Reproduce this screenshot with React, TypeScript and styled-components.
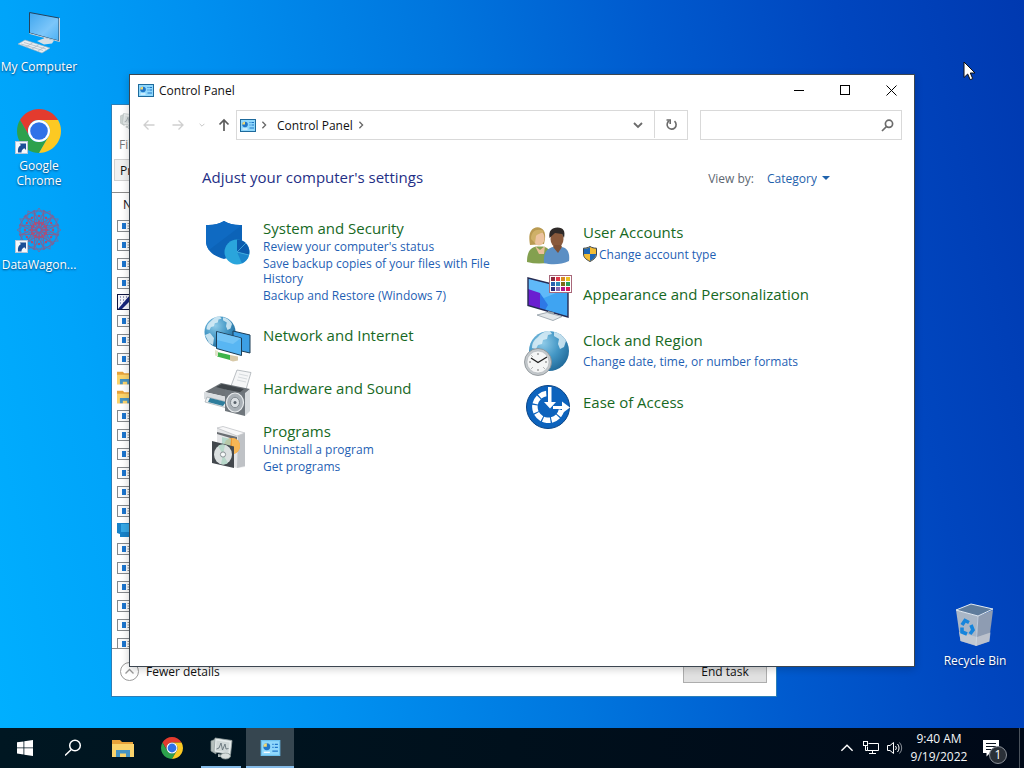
import React from "react";
import styled, { createGlobalStyle } from "styled-components";

const GlobalStyle = createGlobalStyle`
  * { box-sizing: border-box; }
  body { margin: 0; font-family: "Open Sans", "Noto Sans", sans-serif; font-size: 12px; line-height: 15px; color: #111; }
  button, input, select { font: inherit; color: inherit; margin: 0; padding: 0; border: 0; background: none; border-radius: 0; }
  a { text-decoration: none; color: inherit; }
  h1, h2, ul { margin: 0; padding: 0; font-weight: 400; list-style: none; }
  svg { display: block; flex: none; }
`;

const Screen = styled.div`
  display: flex;
  flex-direction: column;
  height: 100vh;
  min-height: 600px;
  overflow: hidden;
  background: linear-gradient(78deg, #00b0ff 0%, #00a4fa 14%, #0090f0 30%, #0076de 50%, #005ace 68%, #0046bf 84%, #0039b0 100%);
`;

const Desktop = styled.main`
  position: relative;
  flex: 1;
`;

const ShortcutColumn = styled.div`
  display: flex;
  flex-direction: column;
  width: 78px;
  padding-top: 8px;
`;

const Shortcut = styled.button`
  display: flex;
  flex-direction: column;
  align-items: center;
  gap: 3px;
  min-height: 99px;
  width: 78px;
  color: #fff;
  text-shadow: 0 1px 2px rgba(0, 20, 60, 0.7);
  white-space: pre;
`;

const BinSpot = styled.div`
  position: absolute;
  right: 10px;
  bottom: 27px;
`;

const Pointer = styled.div`
  position: absolute;
  right: 48px;
  top: 61px;
`;

/* ---------- Windows ---------- */

const Frame = styled.section`
  position: absolute;
  display: flex;
  flex-direction: column;
  background: #fff;
  border: 1px solid #3c4650;
`;

const TaskManagerFrame = styled(Frame)`
  inset: 104px 247px 31px 111px;
  border-color: #2c7fb8;
`;

const ControlPanelFrame = styled(Frame)`
  inset: 74px 109px 61px 129px;
  box-shadow: 0 2px 8px rgba(0, 0, 0, 0.2);
`;

const TmTitle = styled.header`
  display: flex;
  align-items: center;
  gap: 5px;
  height: 31px;
  padding-left: 7px;
  opacity: 0.7;
`;

const TmMenu = styled.nav`
  height: 19px;
  padding: 1px 7px;
  color: #777;
`;

const TmTabs = styled.div`
  display: flex;
  height: 38px;
  padding: 4px 2px 0;
  border-bottom: 1px solid #8c8c8c;
`;

const TmTab = styled.button`
  height: 22px;
  padding: 0 5px;
  border: 1px solid #d0d0d0;
  background: #f0f0f0;
`;

const TmBody = styled.div`
  flex: 1;
  min-height: 0;
  overflow: hidden;
  border-bottom: 1px solid #8c8c8c;
`;

const TmHead = styled.div`
  height: 23px;
  padding: 4px 11px;
`;

const TmRow = styled.div`
  display: flex;
  align-items: center;
  height: 19px;
  padding-left: 5px;
`;

const TmFooter = styled.footer`
  display: flex;
  align-items: center;
  justify-content: space-between;
  height: 47px;
  padding: 0 9px 2px 8px;
`;

const Details = styled.button`
  display: flex;
  align-items: center;
  gap: 7px;
`;

const EndTask = styled.button`
  width: 84px;
  height: 22px;
  border: 1px solid #adadad;
  background: #e1e1e1;
`;

const TitleBar = styled.header`
  display: flex;
  align-items: center;
  height: 30px;
  padding-left: 8px;
  gap: 5px;
`;

const Caption = styled.h1`
  flex: 1;
  font-size: 12px;
`;

const CaptionButtons = styled.div`
  display: flex;
`;

const CaptionButton = styled.button`
  display: grid;
  place-items: center;
  width: 46px;
  height: 30px;
`;

const NavBar = styled.nav`
  display: flex;
  align-items: center;
  height: 30px;
  margin: 5px 12px 0 11px;
`;

const NavButton = styled.button<{ $w: number }>`
  display: grid;
  place-items: center;
  width: ${(p) => p.$w}px;
  height: 30px;
`;

const UpButton = styled(NavButton)`
  padding-left: 6px;
`;

const AddressBar = styled.div`
  display: flex;
  align-items: center;
  flex: 1;
  height: 30px;
  padding-left: 3px;
  border: 1px solid #d9d9d9;
`;

const Crumb = styled.button`
  margin: 0 4px 0 5px;
`;

const AddressEnd = styled.div`
  display: flex;
  margin-left: auto;
`;

const Refresh = styled(NavButton)`
  border-left: 1px solid #d9d9d9;
  height: 28px;
`;

const Search = styled.label`
  display: flex;
  align-items: center;
  width: 202px;
  height: 30px;
  margin-left: 12px;
  padding-right: 7px;
  border: 1px solid #d9d9d9;
`;

const SearchInput = styled.input`
  flex: 1;
  min-width: 0;
  height: 26px;
  padding: 0 6px;
  outline: none;
`;

const Content = styled.div`
  flex: 1;
  padding: 27px 84px 0 72px;
`;

const ContentHead = styled.div`
  display: flex;
  align-items: center;
  justify-content: space-between;
  height: 20px;
`;

const Heading = styled.h2`
  font-size: 15px;
  line-height: 20px;
  color: #1f2f86;
`;

const ViewBy = styled.label`
  display: flex;
  align-items: center;
  gap: 13px;
  padding-top: 2px;
  color: #5d6670;
`;

const SelectWrap = styled.span`
  display: flex;
  align-items: center;
  gap: 5px;
  color: #1f62ac;
`;

const CategorySelect = styled.select`
  appearance: none;
  outline: none;
  height: 16px;
`;

const Columns = styled.div`
  display: grid;
  grid-template-columns: 320px minmax(0, 1fr);
  margin-top: 31px;
  padding-left: 2px;
`;

const Column = styled.div<{ $top: number; $gap: number }>`
  display: flex;
  flex-direction: column;
  gap: ${(p) => p.$gap}px;
  padding-top: ${(p) => p.$top}px;
`;

const Category = styled.article<{ $tail?: number }>`
  display: flex;
  gap: 11px;
  min-height: 48px;
  padding-bottom: ${(p) => p.$tail ?? 0}px;
`;

const CategoryText = styled.div<{ $top: number }>`
  width: 230px;
  padding-top: ${(p) => p.$top}px;
`;

const CategoryTitle = styled.a`
  display: block;
  font-size: 15px;
  line-height: 20px;
  color: #17691f;
  white-space: nowrap;
`;

const Links = styled.ul<{ $gap: number }>`
  display: flex;
  flex-direction: column;
  gap: 2px;
  margin-top: ${(p) => p.$gap}px;
`;

const TaskLink = styled.a`
  display: flex;
  align-items: center;
  gap: 2px;
  color: #1f5fb4;
`;

/* ---------- Taskbar ---------- */

const Taskbar = styled.footer`
  display: flex;
  align-items: stretch;
  justify-content: space-between;
  height: 40px;
  background: linear-gradient(90deg, #001722 0%, #00101c 50%, #000918 100%);
  color: #f4f6f8;
`;

const TaskGroup = styled.div`
  display: flex;
  gap: 1px;
  padding-left: 1px;
`;

const TaskButton = styled.button<{ $state?: "open" | "active" }>`
  display: flex;
  align-items: center;
  justify-content: center;
  width: 48px;
  background: ${(p) => (p.$state === "active" ? "#364650" : "none")};
  position: relative;
  &::after {
    content: "";
    position: absolute;
    bottom: 0;
    left: ${(p) => (p.$state === "active" ? 0 : 4)}px;
    right: ${(p) => (p.$state === "active" ? 0 : 4)}px;
    height: ${(p) => (p.$state ? 2 : 0)}px;
    background: #85bbe8;
  }
`;

const Tray = styled.div`
  display: flex;
  align-items: center;
`;

const TrayButton = styled.button<{ $w: number }>`
  display: grid;
  place-items: center;
  width: ${(p) => p.$w}px;
  height: 40px;
`;

const Clock = styled.button`
  width: 64px;
  line-height: 18px;
  white-space: nowrap;
  text-align: center;
`;

const Notify = styled.button`
  position: relative;
  display: grid;
  place-items: center;
  width: 40px;
  height: 40px;
`;

const Badge = styled.span`
  position: absolute;
  left: 18px;
  top: 18px;
  width: 18px;
  height: 18px;
  line-height: 16px;
  border-radius: 50%;
  border: 1px solid #8a9098;
  background: #2a3038;
  color: #fff;
`;

const ShowDesktop = styled.button`
  width: 5px;
  height: 40px;
  margin-left: 8px;
  border-left: 1px solid #4a525c;
`;

/* ---------- Drawings ---------- */

const Chrome = ({ size }: { size: number }) => (
  <svg width={size} height={size} viewBox="2 2 44 44">
    <path fill="#e33b2e" d="M24 13H43.05A22 22 0 0 0 4.95 13L14.47 29.5A11 11 0 0 1 24 13z" />
    <path fill="#2da14c" d="M14.47 29.5L4.95 13A22 22 0 0 0 24 46L33.53 29.5A11 11 0 0 1 14.47 29.5z" />
    <path fill="#fcc923" d="M33.53 29.5L24 46A22 22 0 0 0 43.05 13H24A11 11 0 0 1 33.53 29.5z" />
    <circle cx="24" cy="24" r="11" fill="#fff" />
    <circle cx="24" cy="24" r="8.8" fill="#2f72e8" />
  </svg>
);

const ShortcutArrow = () => (
  <g>
    <rect x="0.5" y="34.5" width="12" height="12" fill="#f6f8fb" stroke="#b7c6d8" />
    <path d="M3 45.500c-.500-4 .500-6 3-7.500L4.500 36.500H11V43L9.300 41.300C7.500 42.200 6.500 43.500 6.500 45.500z" fill="#1c4f96" />
  </g>
);

const ComputerIcon = () => (
  <svg width="48" height="48" viewBox="0 0 48 48">
    <defs>
      <linearGradient id="scr" x1="0" y1="0" x2="1" y2="1">
        <stop offset="0" stopColor="#3fa6ee" />
        <stop offset="0.6" stopColor="#7cc6fa" />
        <stop offset="1" stopColor="#4ab0f4" />
      </linearGradient>
    </defs>
    <path d="M14.500 4.500L44 10V33L14.500 25z" fill="url(#scr)" stroke="#23435f" />
    <path d="M44.500 10V33.500L14.500 25.500" fill="none" stroke="#c8d4de" />
    <path d="M29 30l5 1v4l-5-1z" fill="#b8c4cc" />
    <path d="M22 33l8-3 9 2.500-2 3-8 1z" fill="#d7dfe5" />
    <path d="M3 36l7-4 25 8-8 5z" fill="#e9eef2" stroke="#9db0be" strokeWidth="0.6" />
    <path d="M6 36l22 6.500M9 34.500l22 6.500M11 39l7-4.500M17 41l7-4.500M23 43l7-4.500" stroke="#a7b5c0" strokeWidth="0.7" />
  </svg>
);

const ChromeShortcut = () => (
  <svg width="48" height="48" viewBox="0 0 48 48">
    <g transform="translate(2 2)"><Chrome size={44} /></g>
    <ShortcutArrow />
  </svg>
);

const WagonIcon = () => (
  <svg width="48" height="48" viewBox="0 0 48 48">
    <g fill="none" strokeWidth="1">
      {Array.from({ length: 12 }, (_, i) => (
        <g key={i} transform={`rotate(${i * 30} 24 24)`}>
          <path d="M24 2l5.500 8.500L24 19l-5.500-8.500z" stroke="#6a72a8" />
          <path d="M18 5h12l-6 10z" stroke="#7c6498" />
          <path d="M24 15l4 4-4 3-4-3z" stroke="#9a5484" />
          <circle cx="24" cy="10" r="1.200" fill="#b8486c" stroke="none" />
          <circle cx="24" cy="17" r="1.100" fill="#cc4462" stroke="none" />
        </g>
      ))}
    </g>
    <ShortcutArrow />
  </svg>
);

const BinIcon = () => (
  <svg width="48" height="48" viewBox="0 0 48 48">
    <path d="M5 8L27 14l-2 29.500L9.500 39z" fill="#a9b6c6" />
    <path d="M27 14l15-6-4 31.500L25 44z" fill="#8e9cb2" />
    <path d="M5 8L20 2l22 5L27 14z" fill="#5f7c9c" stroke="#e3eaf0" />
    <path d="M8 30l1.500 9L25 44l13.500-4.500 1-9L26 35z" fill="#c9ced4" opacity="0.75" />
    <path d="M27 14l-2 30" stroke="#d5dde5" strokeWidth="0.800" />
    <g fill="none" stroke="#1685dc" strokeWidth="3.600">
      <path d="M11 23l3-4.500 4 2" />
      <path d="M20 23l2 5-3 4" />
      <path d="M16 32L11 30v-4.500" />
    </g>
  </svg>
);

const PointerIcon = () => (
  <svg width="13" height="20" viewBox="0 0 13 20">
    <path d="M1 1v15.500l3.700-3.500 2.500 5.700 2.500-1.100L7.300 12H12z" fill="#fff" stroke="#111" />
  </svg>
);

const PanelGlyph = ({ w, h, edge = "#1e6a9c" }: { w: number; h: number; edge?: string }) => (
  <svg width={w} height={h} viewBox="0 0 16 13">
    <rect x="0.500" y="0.500" width="15" height="12" fill="#90d8fc" stroke={edge} />
    <circle cx="5" cy="5.500" r="2.800" fill="#2076c8" />
    <path d="M5 5.500V2.700A2.800 2.800 0 0 0 2.200 5.500z" fill="#f3d873" />
    <path d="M9.500 3.500h1M11.500 3.500h2.500M9.500 6h1M11.500 6h2.500M9.500 9h4.500" stroke="#2076c8" />
    <path d="M2.500 10h5" stroke="#fff" />
  </svg>
);

const MonitorGlyph = ({ size }: { size: number }) => (
  <svg width={size} height={size} viewBox="0 0 24 24">
    <path d="M2 5l5-2v15l-5-3z" fill="#b5bfbd" stroke="#8c9896" strokeWidth="0.700" />
    <path d="M6 2l17 2.500-1.500 14L5 16z" fill="#e4eaea" stroke="#97a2a2" strokeWidth="0.800" />
    <path d="M7.500 4.500l13 2-1 10-12.500-2z" fill="#cfd7d7" />
    <path d="M7.500 13l2.500-1 2-5 1.500 7 2.500-6 1 5 2.500-.500" fill="none" stroke="#66747a" strokeWidth="0.900" />
    <path d="M9 18l5 1v2H9z" fill="#aab4b4" />
    <ellipse cx="16.500" cy="20" rx="5" ry="3" fill="#d8dedd" stroke="#8c9896" strokeWidth="0.800" />
  </svg>
);

const FolderGlyph = ({ w, h }: { w: number; h: number }) => (
  <svg width={w} height={h} viewBox="0 0 22 19">
    <path d="M0 1h8l2 2h11v15H0z" fill="#e8a33a" />
    <path d="M0 5h22v13H0z" fill="#fbd46c" />
    <path d="M4 18v-7h14v7h-4v-3.500H8V18z" fill="#4593c4" />
  </svg>
);

const AppGlyph = () => (
  <svg width="16" height="12" viewBox="0 0 16 12">
    <rect x="0.500" y="0.500" width="15" height="11" fill="#fbfbfb" stroke="#85898d" />
    <rect x="5" y="3" width="4" height="6" fill="#1d74cc" />
    <path d="M10.500 3.500h3M10.500 6h3M10.500 8.500h3" stroke="#8b8f93" />
  </svg>
);

const PenGlyph = () => (
  <svg width="16" height="16" viewBox="0 0 16 16">
    <rect x="0.500" y="0.500" width="15" height="15" fill="#f4f4fa" stroke="#101540" />
    <path d="M3 3h1M6 3h1M9 3h1M3 6h1M6 6h1M9 6h1M3 9h1M6 9h1" stroke="#404a80" />
    <path d="M1 15L13 1v6L5 15z" fill="#16247a" />
  </svg>
);

const BlueGlyph = () => (
  <svg width="16" height="14" viewBox="0 0 16 14">
    <path d="M0 0h16v10l-4 1v3H3v-3l-3-1z" fill="#1882c8" />
    <path d="M4 1h9v8H4z" fill="#37a8e6" />
  </svg>
);

const Continents = () => (
  <path
    d="M12 8c4-5 8-6 12-6l2 3-4 1-1 4-4 1-1 4-4 1-2 4-4-1c0-5 2-8 6-11zM28 3c6 1 10 5 12 9l-2 6-4 2-2-5 1-5-5-3z"
    fill="#e4f2f9"
    opacity="0.8"
  />
);

const GlobeDefs = ({ id }: { id: string }) => (
  <defs>
    <radialGradient id={id} cx="0.35" cy="0.3" r="0.8">
      <stop offset="0" stopColor="#8fcbe8" />
      <stop offset="0.5" stopColor="#4497c5" />
      <stop offset="1" stopColor="#1c6494" />
    </radialGradient>
  </defs>
);

const SecurityIcon = () => (
  <svg width="48" height="48" viewBox="0 -2 48 48">
    <path d="M20 1c5 3 11 4.500 18 4v16c0 9-7 15-18 18C9 36 2 30 2 21V5c7 .500 13-1 18-4z" fill="#0c63b8" />
    <path d="M20 1C15 4 9 5.500 2 5v16c0 3 1 6 3 9L38 5C31 5.500 25 4 20 1z" fill="#0f6ac2" />
    <circle cx="33" cy="32" r="12.500" fill="#2aa5dc" />
    <path d="M33 32V19.500A12.500 12.500 0 0 1 45 35z" fill="#0b5cae" />
    <path d="M33 32L45 35A12.500 12.500 0 0 1 38 43.500z" fill="#1b86cc" />
    <path d="M33 32l9-9M33 32l12 3" stroke="#55bde8" strokeWidth="0.700" />
  </svg>
);

const NetworkIcon = () => (
  <svg width="48" height="48" viewBox="0 0 48 48">
    <GlobeDefs id="g1" />
    <circle cx="16" cy="17" r="15.500" fill="url(#g1)" />
    <g transform="translate(-2 0) scale(.75)"><Continents /></g>
    <path d="M1 20l5-2 4 5-1 7-4-2z" fill="#dceef7" opacity="0.850" />
    <path d="M29 16l17 4v18l-17-4z" fill="#3d9fe4" stroke="#1c3c55" />
    <path d="M12.500 16.500l25 6.500v17.500l-25-7z" fill="#58b6f3" stroke="#1c3c55" />
    <path d="M13 17l24 6-8 6-16-4z" fill="#86cdf8" opacity="0.600" />
    <path d="M13 37l13 3v5l-13-3.500z" fill="#3eb44a" />
    <path d="M11 35l3 1v5.500l-3-1z" fill="#dfe3c8" />
    <path d="M26 40l8 1.500v4l-5 1-3-1z" fill="#d8c9a8" />
  </svg>
);

const HardwareIcon = () => (
  <svg width="48" height="48" viewBox="0 -1 48 48">
    <path d="M27 17L33 1l14 2.500-5 17z" fill="#f5f6f7" stroke="#aab0b5" strokeWidth="0.800" />
    <path d="M35 5l9 2M34 8l9 2M33 11l9 2" stroke="#c9ced2" strokeWidth="0.700" />
    <path d="M1 23l16-9 29 6-10 11z" fill="#6d7378" />
    <path d="M12 18l6-3 22 5-5 4z" fill="#3f454a" />
    <path d="M0 23l36 8v6L0 30z" fill="#d9dde0" />
    <path d="M3 28l20 5v6L1 33z" fill="#eef1f3" stroke="#9ea6ab" strokeWidth="0.700" />
    <path d="M6 29l16 4-3 4-15-4z" fill="#2e7d9c" />
    <path d="M21 20.500l20 3.500v23l-20-5z" fill="#6f767c" />
    <path d="M41 24l5-4v22l-5 5z" fill="#d7dbde" />
    <ellipse cx="31" cy="33.500" rx="8.500" ry="9.500" fill="#a9b0b6" stroke="#e7eaec" strokeWidth="1.200" />
    <ellipse cx="31" cy="33.500" rx="4.500" ry="5.200" fill="#d9dee2" stroke="#828a90" />
    <circle cx="31" cy="33.500" r="1.500" fill="#59626a" />
  </svg>
);

const ProgramsIcon = () => (
  <svg width="48" height="48" viewBox="0 -4 48 48">
    <path d="M13 3l21 6 7-1v34l-8 1-20-6z" fill="#e4e5e7" />
    <path d="M13 3l6-1.500L41 8l-8 3z" fill="#f7f7f8" stroke="#b9bcc0" strokeWidth="0.700" />
    <path d="M13 7l20 5v3l-20-6z" fill="#6a6e73" />
    <path d="M34 11l7-3v33l-8 2z" fill="#bfc2c6" />
    <circle cx="28" cy="21" r="8" fill="#f09a32" />
    <path d="M28 13v16a8 8 0 0 0 0-16z" fill="#f7b655" />
    <path d="M18 12l9 2-1 10-8-2z" fill="#a9d3c4" opacity="0.800" />
    <path d="M8 16l22 5.500V43L8 38z" fill="#43484d" />
    <ellipse cx="19" cy="29.500" rx="9" ry="10" fill="#dbe0e0" />
    <path d="M19 29.500L14 21a9 10 0 0 1 7-1zM19 29.500l5 8.500a9 10 0 0 1-7 1z" fill="#b8d8ca" />
    <circle cx="19" cy="29.500" r="2.600" fill="#f6f8f8" stroke="#8b9396" />
  </svg>
);

const UsersIcon = () => (
  <svg width="48" height="48" viewBox="0 0 48 48">
    <path d="M6 25c-1-7-1-11 1-14 3-5 10-5 13 0 2 4 1 9 0 13z" fill="#b99a52" />
    <ellipse cx="15" cy="18" rx="5.500" ry="7.500" fill="#ecc3a0" />
    <path d="M7 19c0-8 6-11 13-8-2 3-6 2-8 5l-1 7z" fill="#cfb068" />
    <path d="M3 42c0-11 4-15 10-15.500h6c6 1 8 5 8 15.500-8 2-16 2-24 0z" fill="#83a04f" />
    <path d="M11 26l5 4 5-4-1 8-5 0z" fill="#e9bf9a" />
    <ellipse cx="33" cy="19" rx="6.500" ry="8.500" fill="#8a5a3c" />
    <path d="M25.500 18c-1-7 2-10.500 8-10.500s8 3.500 6.500 10.500l-2-4-7-1z" fill="#2f2a28" />
    <path d="M20 43c-1-11 4-15 9-16l5 3 4-3c6 1 8 7 7 14-8 4-18 4-25 2z" fill="#5b8fc4" />
    <path d="M29 27l5 6 4-6-1-2h-7z" fill="#7d5036" />
  </svg>
);

const swatches = ["#8c2a3c", "#e03a4a", "#d98a20", "#e8c020", "#2a62b0", "#2f88b8", "#7a6a18", "#28a05a", "#2c2f80", "#8a68b0", "#b01888", "#d8185a"];

const AppearanceIcon = () => (
  <svg width="48" height="48" viewBox="0 0 48 48">
    <path d="M4 4l40 10v29L4 31.500z" fill="#3fa4f2" />
    <path d="M4 4l40 10-24 10L4 15z" fill="#5fb9f8" />
    <path d="M4 15l12 4v15.500l-12-3z" fill="#6a1fd0" />
    <path d="M16 19l8 12-3 5-5-1.500z" fill="#2d78e6" />
    <path d="M4 4l40 10v29L4 31.500z" fill="none" stroke="#262b52" strokeWidth="1.400" />
    <path d="M24 37l6 1.500v4l-6-1z" fill="#9aa4ac" />
    <path d="M13 41l10-2.500 15 4-9 4z" fill="#e3e7ea" stroke="#8f9aa3" strokeWidth="0.800" />
    <rect x="25.500" y="1.500" width="22" height="17" fill="#fff" stroke="#a8687a" />
    {swatches.map((c, i) => (
      <rect key={c} x={27 + (i % 4) * 5} y={3 + Math.floor(i / 4) * 5} width="4" height="4" fill={c} />
    ))}
  </svg>
);

const ClockIcon = () => (
  <svg width="48" height="48" viewBox="0 -1 48 48">
    <GlobeDefs id="g2" />
    <circle cx="25" cy="22" r="20" fill="url(#g2)" />
    <g transform="translate(2 0)"><Continents /></g>
    <circle cx="14" cy="33" r="13.500" fill="#c3c8cb" stroke="#858c91" strokeWidth="0.800" />
    <circle cx="14" cy="33" r="11" fill="#f4f5f5" stroke="#a9afb3" strokeWidth="0.600" />
    <path d="M14 24v2M14 40v2M5 33h2M21 33h2M7.500 26.500l1 1M19.500 38.500l1 1M7.500 39.500l1-1" stroke="#777" />
    <path d="M7 29l7 4.500L23 28" fill="none" stroke="#222" strokeWidth="1.400" />
  </svg>
);

const EaseIcon = () => (
  <svg width="48" height="48" viewBox="0 -1 48 48">
    <circle cx="24" cy="24" r="21.500" fill="#0d63bd" stroke="#0a4485" />
    <path d="M22.500 10.500A13.500 13.500 0 1 0 37.500 27" fill="none" stroke="#fff" strokeWidth="5.500" strokeDasharray="7.500 1.200" />
    <path d="M22.500 4h6v17h-6z" fill="#0d63bd" />
    <path d="M24 4h3.500v15h4.500L26 25.500 20 19h4z" fill="#fff" />
    <path d="M29 23h9v-4.500l8 6-8 6V26h-9z" fill="#fff" />
  </svg>
);

const UacShield = () => (
  <svg width="14" height="16" viewBox="0 0 14 16">
    <path d="M7 .500c2 1.200 4 1.700 6.500 1.700V8c0 3.500-2.500 5.500-6.500 7.500C3 13.500.500 11.500.500 8V2.200C3 2.200 5 1.700 7 .500z" fill="#f3bd35" stroke="#3a4450" />
    <path d="M7 1.200V8H1V2.700c2 0 4-.500 6-1.500zM7 8h6c0 3-2 5-6 7z" fill="#1f66b4" />
  </svg>
);

const Arrow = ({ dir, color }: { dir: "left" | "right" | "up"; color: string }) => {
  const d = { left: "M12.500 7H2M6.500 2.500L2 7l4.500 4.500", right: "M1.500 7H12M7.500 2.500L12 7l-4.500 4.500", up: "M7 13V2M2.500 6.500L7 2l4.500 4.500" }[dir];
  return (
    <svg width="14" height="14" viewBox="0 0 14 14" fill="none" stroke={color} strokeWidth={dir === "up" ? 1.7 : 1.3}>
      <path d={d} />
    </svg>
  );
};

const Chevron = ({ size, dir, color, weight = 1.6 }: { size: number; dir: "down" | "right" | "up"; color: string; weight?: number }) => {
  const d = { down: "M1 3l4 4 4-4", right: "M3 1l4 4-4 4", up: "M1 7l4-4 4 4" }[dir];
  return (
    <svg width={size} height={size} viewBox="0 0 10 10" fill="none" stroke={color} strokeWidth={weight}>
      <path d={d} />
    </svg>
  );
};

/* ---------- Data ---------- */

type Item = { title: string; icon: React.ReactNode; links: string[]; shield?: boolean };

const leftItems: Item[] = [
  {
    title: "System and Security",
    icon: <SecurityIcon />,
    links: ["Review your computer's status", "Save backup copies of your files with File History", "Backup and Restore (Windows 7)"],
  },
  { title: "Network and Internet", icon: <NetworkIcon />, links: [] },
  { title: "Hardware and Sound", icon: <HardwareIcon />, links: [] },
  { title: "Programs", icon: <ProgramsIcon />, links: ["Uninstall a program", "Get programs"] },
];

const rightItems: Item[] = [
  { title: "User Accounts", icon: <UsersIcon />, links: ["Change account type"], shield: true },
  { title: "Appearance and Personalization", icon: <AppearanceIcon />, links: [] },
  { title: "Clock and Region", icon: <ClockIcon />, links: ["Change date, time, or number formats"] },
  { title: "Ease of Access", icon: <EaseIcon />, links: [] },
];

const processKinds = "aaaapaaaffaaaaaabaaaaaa".split("");

const CategoryList = ({ items, top, gap, linkGap }: { items: Item[]; top: number; gap: number; linkGap: number }) => (
  <Column $top={top} $gap={gap}>
    {items.map((it) => (
      <Category key={it.title} $tail={it.links.length > 2 ? 7 : 0}>
        {it.icon}
        <CategoryText $top={it.links.length ? top : 10}>
          <CategoryTitle href="#">{it.title}</CategoryTitle>
          {it.links.length > 0 && (
            <Links $gap={linkGap}>
              {it.links.map((l) => (
                <li key={l}>
                  <TaskLink href="#">
                    {it.shield && <UacShield />}
                    {l}
                  </TaskLink>
                </li>
              ))}
            </Links>
          )}
        </CategoryText>
      </Category>
    ))}
  </Column>
);

const TaskManager = () => (
  <TaskManagerFrame aria-label="Task Manager">
    <TmTitle><MonitorGlyph size={18} /></TmTitle>
    <TmMenu>File</TmMenu>
    <TmTabs><TmTab>Processes</TmTab></TmTabs>
    <TmBody>
      <TmHead>Name</TmHead>
      {processKinds.map((k, i) => (
        <TmRow key={i}>
          {k === "a" && <AppGlyph />}
          {k === "p" && <PenGlyph />}
          {k === "f" && <FolderGlyph w={16} h={14} />}
          {k === "b" && <BlueGlyph />}
        </TmRow>
      ))}
    </TmBody>
    <TmFooter>
      <Details>
        <svg width="19" height="19" viewBox="0 0 19 19" fill="none" stroke="#9a9a9a">
          <circle cx="9.500" cy="9.500" r="9" />
          <path d="M5.500 11.500l4-4 4 4" strokeWidth="1.300" />
        </svg>
        Fewer details
      </Details>
      <EndTask>End task</EndTask>
    </TmFooter>
  </TaskManagerFrame>
);

const ControlPanel = () => (
  <ControlPanelFrame>
    <TitleBar>
      <PanelGlyph w={16} h={13} />
      <Caption>Control Panel</Caption>
      <CaptionButtons>
        <CaptionButton aria-label="Minimize">
          <svg width="11" height="11" stroke="#000"><path d="M0 5.500h10" /></svg>
        </CaptionButton>
        <CaptionButton aria-label="Maximize">
          <svg width="11" height="11" fill="none" stroke="#000"><rect x="0.500" y="0.500" width="9" height="9" /></svg>
        </CaptionButton>
        <CaptionButton aria-label="Close">
          <svg width="11" height="11" stroke="#000"><path d="M0.500 0.500l10 10M10.500 0.500l-10 10" /></svg>
        </CaptionButton>
      </CaptionButtons>
    </TitleBar>
    <NavBar>
      <NavButton $w={16} aria-label="Back"><Arrow dir="left" color="#cfcfcf" /></NavButton>
      <NavButton $w={42} aria-label="Forward"><Arrow dir="right" color="#cfcfcf" /></NavButton>
      <NavButton $w={6} aria-label="Recent locations"><Chevron size={6} dir="down" color="#c4c4c4" /></NavButton>
      <UpButton $w={31} aria-label="Up"><Arrow dir="up" color="#5c5c5c" /></UpButton>
      <AddressBar>
        <PanelGlyph w={16} h={13} />
        <NavButton $w={16} aria-label="Locations"><Chevron size={8} dir="right" color="#666" /></NavButton>
        <Crumb>Control Panel</Crumb>
        <Chevron size={8} dir="right" color="#666" />
        <AddressEnd>
          <NavButton $w={32} aria-label="Previous locations"><Chevron size={10} dir="down" color="#6b6b6b" weight={1.8} /></NavButton>
          <Refresh $w={33} aria-label="Refresh">
            <svg width="13" height="13" viewBox="0 0 13 13" fill="none" stroke="#6b6b6b" strokeWidth="1.600">
              <path d="M9.500 3.200A4.500 4.500 0 1 1 4 3" />
              <path d="M1.500 2h3.700v4" />
            </svg>
          </Refresh>
        </AddressEnd>
      </AddressBar>
      <Search>
        <SearchInput type="text" aria-label="Search Control Panel" />
        <svg width="13" height="13" viewBox="0 0 13 13" fill="none" stroke="#6b6b6b" strokeWidth="1.700">
          <circle cx="8" cy="4.800" r="3.600" />
          <path d="M5.500 7.500L1 12" />
        </svg>
      </Search>
    </NavBar>
    <Content>
      <ContentHead>
        <Heading>Adjust your computer's settings</Heading>
        <ViewBy>
          View by:
          <SelectWrap>
            <CategorySelect defaultValue="Category">
              <option>Category</option>
            </CategorySelect>
            <svg width="8" height="4" viewBox="0 0 8 4"><path d="M0 0h8L4 4z" fill="#1f62ac" /></svg>
          </SelectWrap>
        </ViewBy>
      </ContentHead>
      <Columns>
        <CategoryList items={leftItems} top={0} gap={5} linkGap={1} />
        <CategoryList items={rightItems} top={2} gap={6} linkGap={4} />
      </Columns>
    </Content>
  </ControlPanelFrame>
);

export default function App() {
  return (
    <Screen>
      <GlobalStyle />
      <Desktop>
        <ShortcutColumn>
          <Shortcut><ComputerIcon />My Computer</Shortcut>
          <Shortcut><ChromeShortcut />{"Google\nChrome"}</Shortcut>
          <Shortcut><WagonIcon />DataWagon...</Shortcut>
        </ShortcutColumn>
        <BinSpot><Shortcut><BinIcon />Recycle Bin</Shortcut></BinSpot>
        <TaskManager />
        <ControlPanel />
        <Pointer><PointerIcon /></Pointer>
      </Desktop>
      <Taskbar>
        <TaskGroup>
          <TaskButton aria-label="Start">
            <svg width="16" height="16" viewBox="0 0 16 16" fill="#fff">
              <path d="M0 2.300l6.500-.900v6.100H0zM7.300 1.300L16 0v7.500H7.300zM0 8.300h6.500v6.200L0 13.600zM7.300 8.300H16V16l-8.700-1.300z" />
            </svg>
          </TaskButton>
          <TaskButton aria-label="Search">
            <svg width="18" height="18" viewBox="0 0 18 18" fill="none" stroke="#fff" strokeWidth="1.500">
              <circle cx="10" cy="6.500" r="5.300" />
              <path d="M6.300 10.500L0 16.500" />
            </svg>
          </TaskButton>
          <TaskButton aria-label="File Explorer"><FolderGlyph w={22} h={19} /></TaskButton>
          <TaskButton aria-label="Google Chrome"><Chrome size={22} /></TaskButton>
          <TaskButton aria-label="Task Manager" $state="open"><MonitorGlyph size={24} /></TaskButton>
          <TaskButton aria-label="Control Panel" $state="active"><PanelGlyph w={21} h={16} edge="#6cc0ee" /></TaskButton>
        </TaskGroup>
        <Tray>
          <TrayButton $w={24} aria-label="Show hidden icons"><Chevron size={14} dir="up" color="#fff" weight={1} /></TrayButton>
          <TrayButton $w={24} aria-label="Network">
            <svg width="16" height="14" viewBox="0 0 16 14" fill="none" stroke="#fff">
              <path d="M5.500 2.500h10v7H4.500V5.500M9.500 9.500v3M6 12.500h7" />
              <rect x="0.500" y="0.500" width="4" height="4" />
              <path d="M2.500 5v4.500h2" />
            </svg>
          </TrayButton>
          <TrayButton $w={24} aria-label="Volume">
            <svg width="16" height="14" viewBox="0 0 16 14" fill="none" stroke="#fff">
              <path d="M0.500 4.500h2.500L6.500 1.500v11L3 9.500H.500z" />
              <path d="M8.500 5a3 3 0 0 1 0 4M10.500 3a6 6 0 0 1 0 8" />
              <path d="M12.500 1.500a8 8 0 0 1 0 11" stroke="#8a9098" />
            </svg>
          </TrayButton>
          <Clock>9:40 AM<br />9/19/2022</Clock>
          <Notify aria-label="Notifications">
            <svg width="16" height="17" viewBox="0 0 16 17">
              <path d="M0 0h16v13H7l-3.500 3.500V13H0z" fill="#fff" />
              <path d="M3 3.500h10M3 6.500h10M3 9.500h6" stroke="#0a1420" />
            </svg>
            <Badge>1</Badge>
          </Notify>
          <ShowDesktop aria-label="Show desktop" />
        </Tray>
      </Taskbar>
    </Screen>
  );
}
